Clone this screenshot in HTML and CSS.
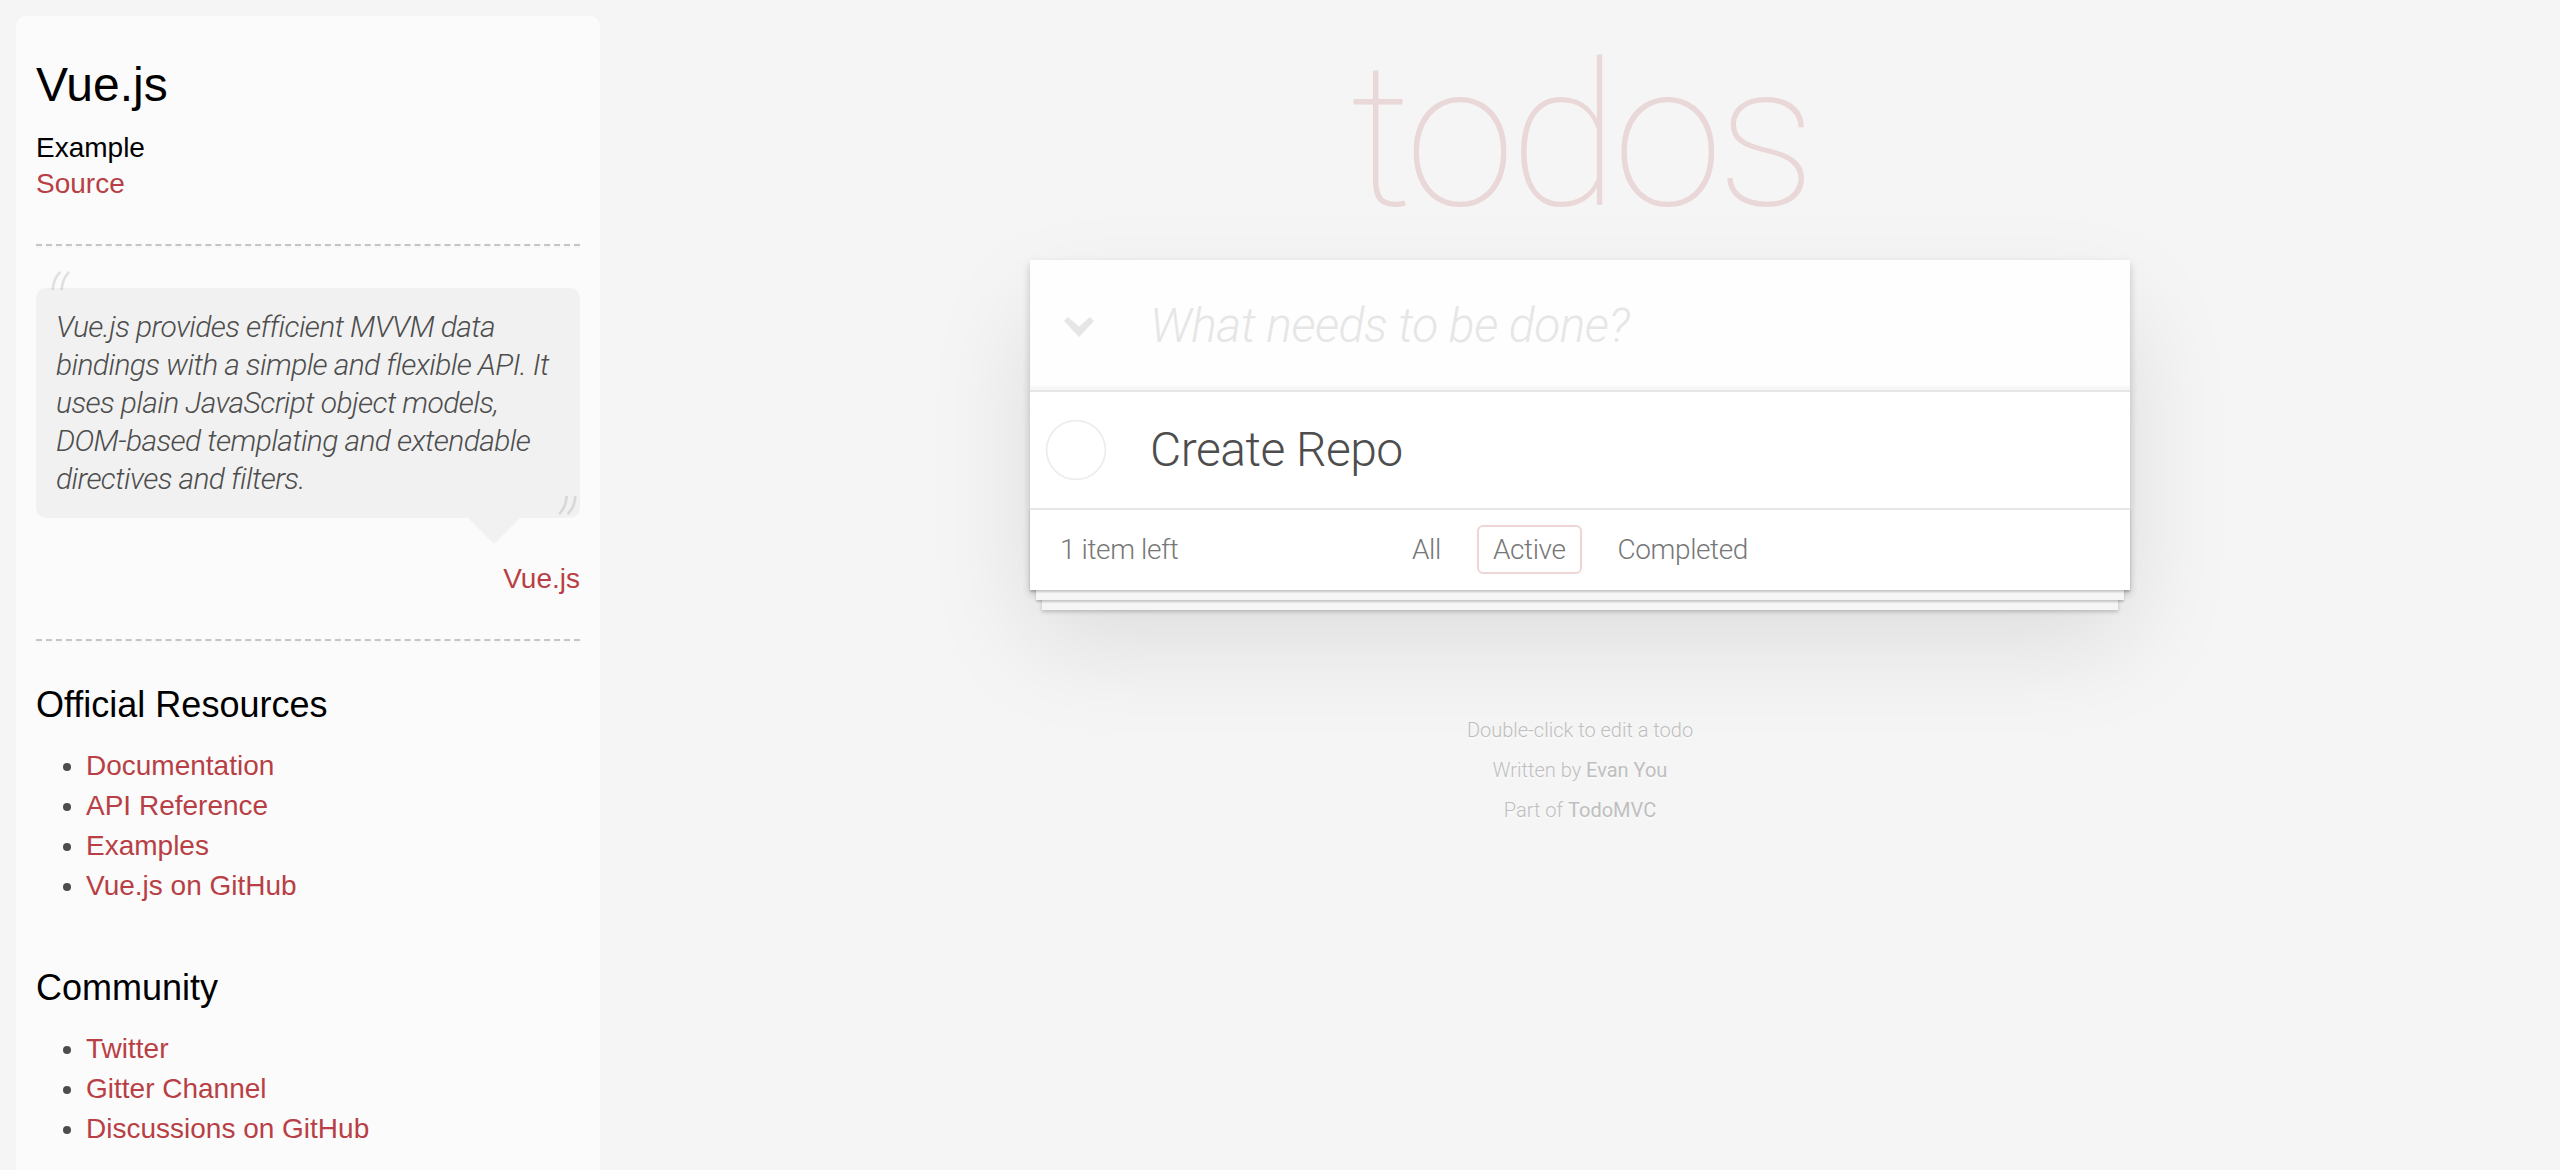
FILE: index.html
```html
<!DOCTYPE html>
<html lang="en">
<head>
<meta charset="utf-8">
<title>Vue.js • TodoMVC</title>
<link rel="stylesheet" href="styles.css">
</head>
<body>
<div class="page">
  <aside class="learn">
    <header class="learn-header">
      <h3 class="learn-title">Vue.js</h3>
      <div class="source-links">
        <h5 class="source-label">Example</h5>
        <a class="learn-link" href="#">Source</a>
      </div>
    </header>
    <hr class="learn-rule first-rule">
    <blockquote class="quote">
      <div class="speech-bubble">
        <p class="quote-text">Vue.js provides efficient MVVM data bindings with a simple and flexible API. It uses plain JavaScript object models, DOM-based templating and extendable directives and filters.</p>
      </div>
      <footer class="quote-source"><a class="learn-link" href="#">Vue.js</a></footer>
    </blockquote>
    <hr class="learn-rule">
    <h4 class="learn-heading">Official Resources</h4>
    <ul class="learn-list">
      <li><a class="learn-link" href="#">Documentation</a></li>
      <li><a class="learn-link" href="#">API Reference</a></li>
      <li><a class="learn-link" href="#">Examples</a></li>
      <li><a class="learn-link" href="#">Vue.js on GitHub</a></li>
    </ul>
    <h4 class="learn-heading">Community</h4>
    <ul class="learn-list">
      <li><a class="learn-link" href="#">Twitter</a></li>
      <li><a class="learn-link" href="#">Gitter Channel</a></li>
      <li><a class="learn-link" href="#">Discussions on GitHub</a></li>
    </ul>
  </aside>

  <main class="app-column">
    <h1 class="app-title">todos</h1>
    <section class="todoapp">
      <header class="header-row">
        <label class="toggle-all" aria-label="Mark all as complete">
          <svg class="chevron" width="30" height="20" viewBox="0 0 30 20"><polygon points="0,4 4,0 15,9.5 26,0 30,4 15,20" fill="#e6e6e6"/></svg>
        </label>
        <input class="new-todo" type="text" placeholder="What needs to be done?">
      </header>
      <section class="main">
        <ul class="todo-list">
          <li class="todo-item">
            <svg class="toggle" width="62" height="62" viewBox="0 0 62 62"><circle cx="31" cy="31" r="29.4" fill="none" stroke="#ededed" stroke-width="1.8"/></svg>
            <span class="todo-label">Create Repo</span>
          </li>
        </ul>
      </section>
      <footer class="footer">
        <span class="todo-count"><strong class="count-num">1</strong> item left</span>
        <ul class="filters">
          <li><a class="filter-link" href="#">All</a></li>
          <li><a class="filter-link selected" href="#">Active</a></li>
          <li><a class="filter-link" href="#">Completed</a></li>
        </ul>
        <span class="footer-spacer"></span>
      </footer>
    </section>
    <footer class="info">
      <p class="info-line">Double-click to edit a todo</p>
      <p class="info-line">Written by <a class="info-link" href="#">Evan You</a></p>
      <p class="info-line">Part of <a class="info-link" href="#">TodoMVC</a></p>
    </footer>
  </main>
</div>
</body>
</html>
```
FILE: styles.css
```css
html, body {
  margin: 0;
  padding: 0;
}

body {
  background: #f5f5f5;
  color: #4d4d4d;
  font-family: Roboto, "Liberation Sans", Arial, sans-serif;
  font-weight: 300;
  font-size: 28px;
  line-height: 39.2px;
  -webkit-font-smoothing: antialiased;
}

.page {
  display: grid;
  grid-template-columns: 600px 1fr;
  align-items: start;
  min-height: 100vh;
}

/* ---------- learn sidebar ---------- */
.learn {
  margin: 16px 0 0 16px;
  width: 584px;
  box-sizing: border-box;
  padding: 20px 20px 40px;
  border-radius: 10px;
  background: rgba(255, 255, 255, 0.6);
  font-family: "Liberation Sans", Arial, sans-serif;
  font-weight: 400;
}

.learn-title {
  margin: 20px 0 17px;
  font-size: 48px;
  font-weight: 500;
  line-height: 1.2;
  color: #000;
}

.source-label {
  margin: 0;
  font-size: 28px;
  font-weight: 500;
  line-height: 1.2;
  color: #000;
}

.learn-link {
  color: #b83f45;
  text-decoration: none;
  font-weight: 400;
}

.learn-rule {
  margin: 40px 0;
  height: 0;
  border: 0;
  border-top: 2px dashed #c5c5c5;
  border-bottom: 2px dashed #f7f7f7;
}

.first-rule {
  margin-top: 41px;
}

.quote {
  margin: 40px 0;
}

.speech-bubble {
  position: relative;
  padding: 20px;
  background: rgba(0, 0, 0, 0.04);
  border-radius: 10px;
}

.speech-bubble::after {
  content: '';
  position: absolute;
  top: 100%;
  right: 60px;
  border: 26px solid transparent;
  border-top-color: rgba(0, 0, 0, 0.04);
}

.quote-text {
  margin: 0;
  font-family: Roboto, "Liberation Sans", sans-serif;
  font-style: italic;
  font-weight: 300;
  font-size: 30px;
  line-height: 38px;
  letter-spacing: -0.6px;
  color: #4d4d4d;
}

.quote-text::before,
.quote-text::after {
  position: absolute;
  font-size: 100px;
  font-weight: 100;
  line-height: 130px;
  letter-spacing: 0;
  opacity: 0.15;
}

.quote-text::before {
  content: '\201C';
  top: -40px;
  left: 6px;
}

.quote-text::after {
  content: '\201D';
  bottom: -84px;
  right: 6px;
}

.quote-source {
  margin-top: 41px;
  text-align: right;
}

.learn-heading {
  margin: 20px 0;
  font-size: 36px;
  font-weight: 500;
  line-height: 1.2;
  color: #000;
}

.learn-list {
  margin: 0 0 60px 50px;
  padding: 0;
}

.learn-list li {
  line-height: 40px;
}

/* ---------- todo app ---------- */
.app-column {
  width: 1100px;
  margin: 0 auto;
}

.app-title {
  margin: 0;
  padding-top: 37px;
  font-size: 200px;
  line-height: 200px;
  font-weight: 100;
  letter-spacing: -6px;
  text-align: center;
  color: rgba(175, 47, 47, 0.15);
  text-rendering: optimizeLegibility;
}

.todoapp {
  margin-top: 23px;
  background: #fff;
  box-shadow: 0 4px 8px 0 rgba(0, 0, 0, 0.2), 0 50px 100px 0 rgba(0, 0, 0, 0.1);
}

.header-row {
  display: flex;
  align-items: center;
  height: 130px;
  background: rgba(0, 0, 0, 0.003);
  box-shadow: inset 0 -4px 2px rgba(0, 0, 0, 0.03);
}

.toggle-all {
  flex: 0 0 120px;
  box-sizing: border-box;
  padding: 4px 0 0 34px;
  display: flex;
  align-items: center;
}

.chevron {
  display: block;
}

.new-todo {
  flex: 1;
  min-width: 0;
  height: 130px;
  box-sizing: border-box;
  padding: 0 32px 0 0;
  margin: 0;
  border: 0;
  outline: 0;
  background: transparent;
  font-family: Roboto, "Liberation Sans", sans-serif;
  font-weight: 300;
  font-size: 48px;
  line-height: 66px;
  letter-spacing: -0.5px;
  color: #4d4d4d;
}

.new-todo::placeholder {
  font-style: italic;
  font-weight: 300;
  color: #e6e6e6;
}

.main {
  border-top: 2px solid #e6e6e6;
}

.todo-list {
  margin: 0;
  padding: 0;
  list-style: none;
}

.todo-item {
  display: flex;
  align-items: center;
  font-size: 48px;
  border-bottom: 2px solid #ededed;
}

.todo-item:last-child {
  border-bottom: none;
}

.toggle {
  flex: 0 0 auto;
  display: block;
  margin-left: 15px;
}

.todo-label {
  padding: 30px 30px 30px 43px;
  line-height: 56px;
  letter-spacing: -0.5px;
  color: #4d4d4d;
  word-break: break-all;
}

.footer {
  display: grid;
  grid-template-columns: 1fr auto 1fr;
  align-items: center;
  height: 82px;
  box-sizing: border-box;
  padding: 20px 30px;
  border-top: 2px solid #e6e6e6;
  color: #777;
  letter-spacing: -0.4px;
  box-shadow: 0 2px 2px rgba(0, 0, 0, 0.2),
              0 16px 0 -6px #f6f6f6,
              0 18px 2px -6px rgba(0, 0, 0, 0.2),
              0 32px 0 -12px #f6f6f6,
              0 34px 4px -12px rgba(0, 0, 0, 0.2);
}

.todo-count {
  text-align: left;
}

.count-num {
  font-weight: 300;
}

.filters {
  display: flex;
  gap: 8px;
  margin: 0;
  padding: 0;
  list-style: none;
}

.filter-link {
  color: inherit;
  margin: 6px;
  padding: 6px 14px;
  text-decoration: none;
  border: 2px solid transparent;
  border-radius: 6px;
}

.filter-link.selected {
  border-color: rgba(175, 47, 47, 0.2);
}

.info {
  margin: 130px auto 0;
  color: #bfbfbf;
  font-size: 20px;
  text-shadow: 0 2px 0 rgba(255, 255, 255, 0.5);
  text-align: center;
}

.info-line {
  margin: 20px 0;
  line-height: 1;
}

.info-link {
  color: inherit;
  text-decoration: none;
  font-weight: 400;
}
```
